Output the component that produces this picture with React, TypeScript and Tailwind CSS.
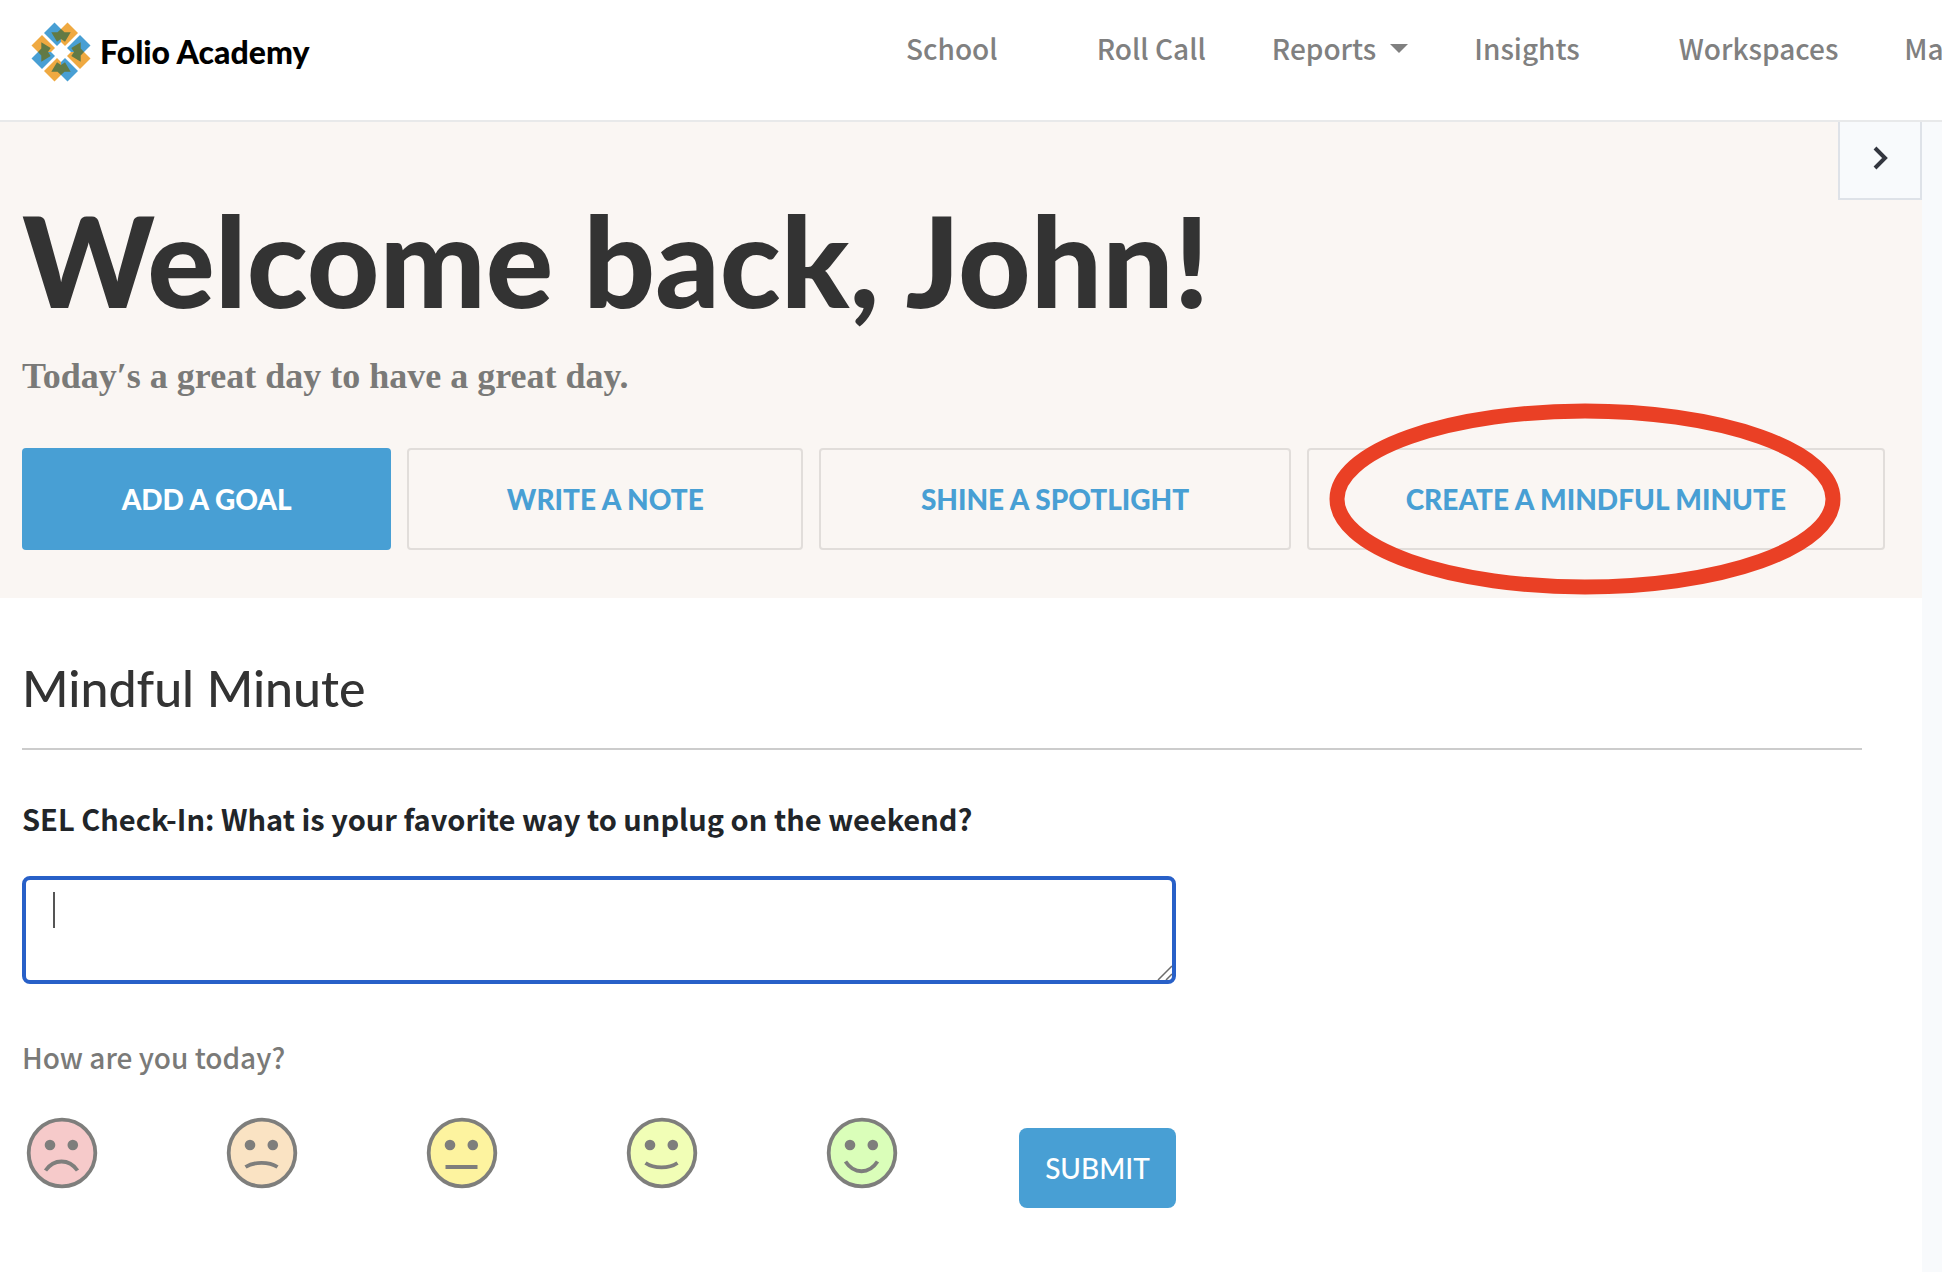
import React from "react";

const heading = "font-['Lato',sans-serif]";

function Logo() {
  return (
    <svg viewBox="-30 -30 60 60" className="size-[60px] shrink-0" aria-hidden="true">
      {[0, 90, 180, 270].map((angle) => (
        <g key={angle} transform={`rotate(${angle})`}>
          <path d="M6.5 -29.5 17 -19 4 -6 -6.5 -16.5Z" fill="#efa941" />
          <path d="M-6.5 -29.5 -17 -19 -4 -6 0 -10 0 -23Z" fill="#489fd4" />
          <path
            d="M0 -23 3.5 -19.7H9.7L4 -10.3 0 -13 -4 -10.3 -9.7 -19.7H-3.5Z"
            fill="#627a45"
          />
        </g>
      ))}
    </svg>
  );
}

const moods = [
  { name: "Very sad", fill: "#f6caca", mouth: "M-16.5 17.5C-8 5.5 7 5.5 15.5 17.5" },
  { name: "Sad", fill: "#fae3c3", mouth: "M-16.5 14C-8 8.5 7 8.5 15.5 14" },
  { name: "Neutral", fill: "#fdf39f", mouth: "M-16.5 14H15.5" },
  { name: "Happy", fill: "#f1feb6", mouth: "M-16.5 10C-8 15.8 7 15.8 15.5 10" },
  { name: "Very happy", fill: "#dafeb9", mouth: "M-16.5 8.5C-8 21.5 7 21.5 15.5 8.5" },
];

function Mood({ name, fill, mouth }: { name: string; fill: string; mouth: string }) {
  return (
    <label className="relative block size-[72px] cursor-pointer">
      <input type="radio" name="mood" aria-label={name} className="absolute inset-0 size-full opacity-0" />
      <svg viewBox="-36 -36 72 72" className="size-full" aria-hidden="true">
        <circle r="33.3" fill={fill} stroke="#7e7e7c" strokeWidth="3.8" />
        <circle cx="-12" cy="-8" r="5.3" fill="#7e7e7c" />
        <circle cx="10.8" cy="-8" r="5.3" fill="#7e7e7c" />
        <path d={mouth} fill="none" stroke="#7e7e7c" strokeWidth="3.8" />
      </svg>
    </label>
  );
}

function ActionButton({ children }: { children: React.ReactNode }) {
  return (
    <button
      type="button"
      className="h-[102px] rounded border-2 border-[#e1ddda] text-center text-[28px] font-black whitespace-nowrap text-[#489fd4]"
    >
      {children}
    </button>
  );
}

export default function App() {
  return (
    <div className="min-h-screen overflow-hidden bg-white font-['Noto_Sans_CJK_SC',sans-serif]">
      <header className="flex h-[122px] items-start border-b-2 border-[#e8e9ea] pt-[22px] pl-[31px]">
        <a href="#home" className={`${heading} flex w-[280px] shrink-0 items-center gap-[9px] text-[32px] leading-[60px] font-black whitespace-nowrap text-black`}>
          <Logo />
          Folio Academy
        </a>
        <nav className="ml-[595px] flex shrink-0 items-center gap-[66px] text-[28px] leading-[52px] font-medium whitespace-nowrap text-[#808080]">
          <a href="#school" className="mr-[33px]">School</a>
          <a href="#roll-call">Roll Call</a>
          <button type="button" className="flex items-center gap-[14px]">
            Reports
            <svg viewBox="0 0 18 9" className="h-[9px] w-[18px]" aria-hidden="true">
              <path d="M0 0H18L9 9Z" fill="currentColor" />
            </svg>
          </button>
          <a href="#insights" className="mr-[33px]">Insights</a>
          <a href="#workspaces">Workspaces</a>
          <a href="#more">Ma</a>
        </nav>
      </header>

      <div className="flex min-h-[1150px]">
        <main className="min-w-0 flex-1">
          <section className={`${heading} relative bg-[#faf6f3] pt-[68px] pr-[37px] pb-12 pl-[22px]`}>
            <button
              type="button"
              aria-label="Expand side panel"
              className="absolute top-0 right-0 flex h-[78px] w-[84px] items-center justify-center border-2 border-t-0 border-[#dee2e8] bg-[#f8fafc] pb-1 pl-[2px]"
            >
              <svg viewBox="0 0 16 24" className="h-6 w-4" aria-hidden="true">
                <path d="M2 2 12 12 2 22" fill="none" stroke="#33363f" strokeWidth="4" />
              </svg>
            </button>
            <h1 className="text-[126px] leading-[140px] font-black whitespace-nowrap text-[#333333]">
              Welcome back, John!
            </h1>
            <p className="mt-6 font-['Liberation_Serif',serif] text-[36px] leading-[44px] font-bold text-[#7a7a78]">
              Today&prime;s a great day to have a great day.
            </p>
            <div className="mt-[50px] grid grid-cols-[369fr_396fr_471fr_578fr] gap-4">
              <button
                type="button"
                className="h-[102px] rounded bg-[#489fd4] text-center text-[28px] font-black whitespace-nowrap text-white"
              >
                ADD A GOAL
              </button>
              <ActionButton>WRITE A NOTE</ActionButton>
              <ActionButton>SHINE A SPOTLIGHT</ActionButton>
              <div className="relative grid">
                <ActionButton>CREATE A MINDFUL MINUTE</ActionButton>
                <svg
                  viewBox="0 0 512 192"
                  className="pointer-events-none absolute -top-[45px] left-[22px] h-[192px] w-[512px]"
                  aria-hidden="true"
                >
                  <ellipse cx="256" cy="96" rx="248" ry="88" fill="none" stroke="#ea4025" strokeWidth="15" />
                </svg>
              </div>
            </div>
          </section>

          <section className="pt-[58px] pr-[60px] pl-[22px]">
            <h2 className={`${heading} border-b-2 border-[#cccccc] pb-7 text-[50px] leading-[64px] font-medium text-[#333333]`}>
              Mindful Minute
            </h2>
            <form className="w-[1154px]" onSubmit={(e) => e.preventDefault()}>
              <label htmlFor="check-in" className="mt-[46px] block text-[29px] leading-[44px] font-bold text-[#212529]">
                SEL Check-In: What is your favorite way to unplug on the weekend?
              </label>
              <div className="relative mt-9">
                <textarea
                  id="check-in"
                  className="block h-[108px] w-full resize-none rounded-lg border-4 border-[#2860c8] bg-white px-7 py-3 text-[29px] leading-9 text-[#212529] outline-none"
                />
                <span className="absolute top-4 left-[31px] h-9 w-[2px] bg-[#555555]" />
                <svg viewBox="0 0 16 16" className="pointer-events-none absolute right-1 bottom-1 size-4" aria-hidden="true">
                  <path d="M2 16 16 2M10 16 16 10" fill="none" stroke="#6b6b6b" strokeWidth="1.5" />
                </svg>
              </div>
              <fieldset className="mt-[51px] flex items-start">
                <legend className="text-[28px] leading-[44px] font-medium text-[#7a7a78]">How are you today?</legend>
                <div className="mt-[38px] ml-1 flex gap-32">
                  {moods.map((mood) => (
                    <Mood key={mood.name} {...mood} />
                  ))}
                </div>
                <button
                  type="submit"
                  className={`${heading} mt-[49px] ml-auto h-[80px] w-[157px] rounded-lg bg-[#489fd4] text-[28px] font-medium text-white`}
                >
                  SUBMIT
                </button>
              </fieldset>
            </form>
          </section>
        </main>
        <aside className="w-5 shrink-0 bg-[#f8fafc]" />
      </div>
    </div>
  );
}
